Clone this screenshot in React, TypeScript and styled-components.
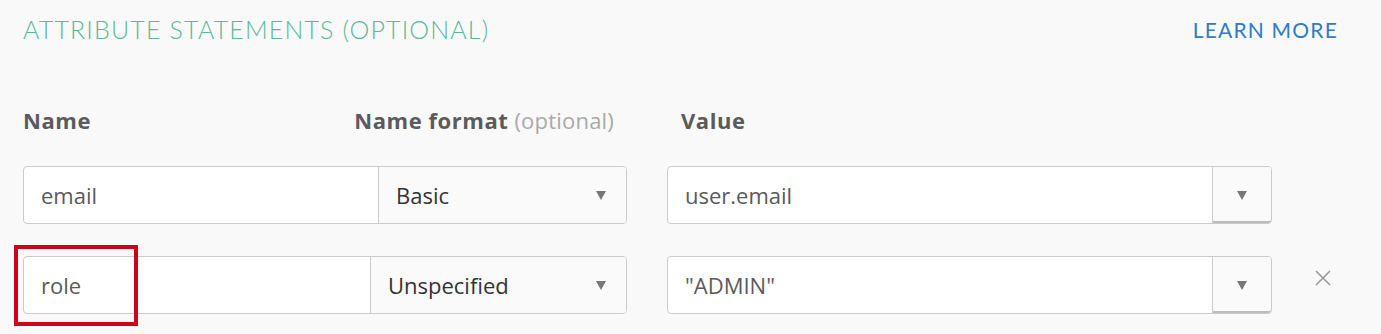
import styled, { createGlobalStyle } from "styled-components";

const GlobalStyle = createGlobalStyle`
  html, body {
    margin: 0;
    padding: 0;
    background: #f9f9f9;
  }
  body {
    font-family: "Open Sans", Lato, sans-serif;
  }
`;

const Page = styled.div`
  width: 1381px;
  height: 334px;
  box-sizing: border-box;
  padding: 12px 43px 0 23px;
  overflow: hidden;
`;

const Header = styled.div`
  display: flex;
  justify-content: space-between;
  align-items: center;
  height: 34px;
`;

const Title = styled.h2`
  margin: 0;
  font-family: Lato, sans-serif;
  font-size: 25px;
  font-weight: 300;
  letter-spacing: 1.15px;
  color: #5bb899;
`;

const LearnMore = styled.a`
  font-family: Lato, sans-serif;
  font-size: 21px;
  font-weight: 400;
  letter-spacing: 1.2px;
  color: #2f7bc8;
  text-decoration: none;
  margin-top: 1px;
`;

const Grid = styled.div`
  display: grid;
  grid-template-columns: 604px 605px 60px;
  column-gap: 40px;
  row-gap: 32px;
  margin-top: 61px;
`;

const Row = styled.div`
  display: contents;
`;

const HeadCell = styled.div<{ $padLeft?: number }>`
  display: flex;
  justify-content: space-between;
  padding: 0 13px 0 ${(p) => p.$padLeft ?? 0}px;
  margin-bottom: 1px;
`;

const Label = styled.div`
  font-size: 22px;
  line-height: 26px;
  font-weight: 700;
  letter-spacing: 0.55px;
  color: #5b5b5b;
`;

const Optional = styled.span`
  font-weight: 400;
  letter-spacing: 0.2px;
  color: #a9a9a9;
  margin-left: 6px;
`;

const Group = styled.div<{ $flagged?: boolean }>`
  position: relative;
  display: flex;
  height: 58px;
  box-sizing: border-box;
  border: 1px solid #cbcbcb;
  border-radius: 4px;
  background: #fff;

  ${(p) =>
    p.$flagged &&
    `
    &::after {
      content: "";
      position: absolute;
      left: -10px;
      top: -12px;
      width: 124px;
      height: 81px;
      box-sizing: border-box;
      border: 4px solid #d0021b;
      pointer-events: none;
    }
  `}
`;

const TextCell = styled.div`
  flex: 1;
  display: flex;
  align-items: center;
  padding-left: 17px;
  font-size: 22px;
  color: #5a5a5a;
`;

const SelectCell = styled.div<{ $width: number }>`
  width: ${(p) => p.$width}px;
  box-sizing: border-box;
  border-left: 1px solid #cbcbcb;
  border-radius: 0 3px 3px 0;
  background: #fafafa;
  display: flex;
  align-items: center;
  justify-content: space-between;
  padding: 0 20px 0 17px;
  font-size: 22px;
  color: #333;
`;

const Caret = styled.span`
  width: 0;
  height: 0;
  border-left: 5px solid transparent;
  border-right: 5px solid transparent;
  border-top: 9px solid #777;
`;

const DropButton = styled.div`
  width: 59px;
  box-sizing: border-box;
  border-left: 1px solid #cbcbcb;
  border-bottom: 2px solid #bdbdbd;
  border-radius: 0 3px 3px 0;
  background: #fafafa;
  display: flex;
  align-items: center;
  justify-content: center;
  padding-top: 2px;
`;

const RemoveCell = styled.div`
  display: flex;
  align-items: center;
  padding: 0 0 14px 3px;
`;

type Attr = {
  name: string;
  format: string;
  formatWidth: number;
  value: string;
  removable: boolean;
  flagged: boolean;
};

const attrs: Attr[] = [
  { name: "email", format: "Basic", formatWidth: 248, value: "user.email", removable: false, flagged: false },
  { name: "role", format: "Unspecified", formatWidth: 256, value: "\"ADMIN\"", removable: true, flagged: true },
];

const Cross = () => (
  <svg width="16" height="16" viewBox="0 0 16 16">
    <path d="M1 1L15 15M15 1L1 15" stroke="#999" strokeWidth="1.6" fill="none" />
  </svg>
);

export default function App() {
  return (
    <>
      <GlobalStyle />
      <Page>
        <Header>
          <Title>ATTRIBUTE STATEMENTS (OPTIONAL)</Title>
          <LearnMore href="#">LEARN MORE</LearnMore>
        </Header>
        <Grid>
          <Row>
            <HeadCell>
              <Label>Name</Label>
              <Label>
                Name format<Optional>(optional)</Optional>
              </Label>
            </HeadCell>
            <HeadCell $padLeft={14}>
              <Label>Value</Label>
            </HeadCell>
            <div />
          </Row>
          {attrs.map((a) => (
            <Row key={a.name}>
              <Group $flagged={a.flagged}>
                <TextCell>{a.name}</TextCell>
                <SelectCell $width={a.formatWidth}>
                  {a.format}
                  <Caret />
                </SelectCell>
              </Group>
              <Group>
                <TextCell>{a.value}</TextCell>
                <DropButton>
                  <Caret />
                </DropButton>
              </Group>
              <RemoveCell>{a.removable && <Cross />}</RemoveCell>
            </Row>
          ))}
        </Grid>
      </Page>
    </>
  );
}
